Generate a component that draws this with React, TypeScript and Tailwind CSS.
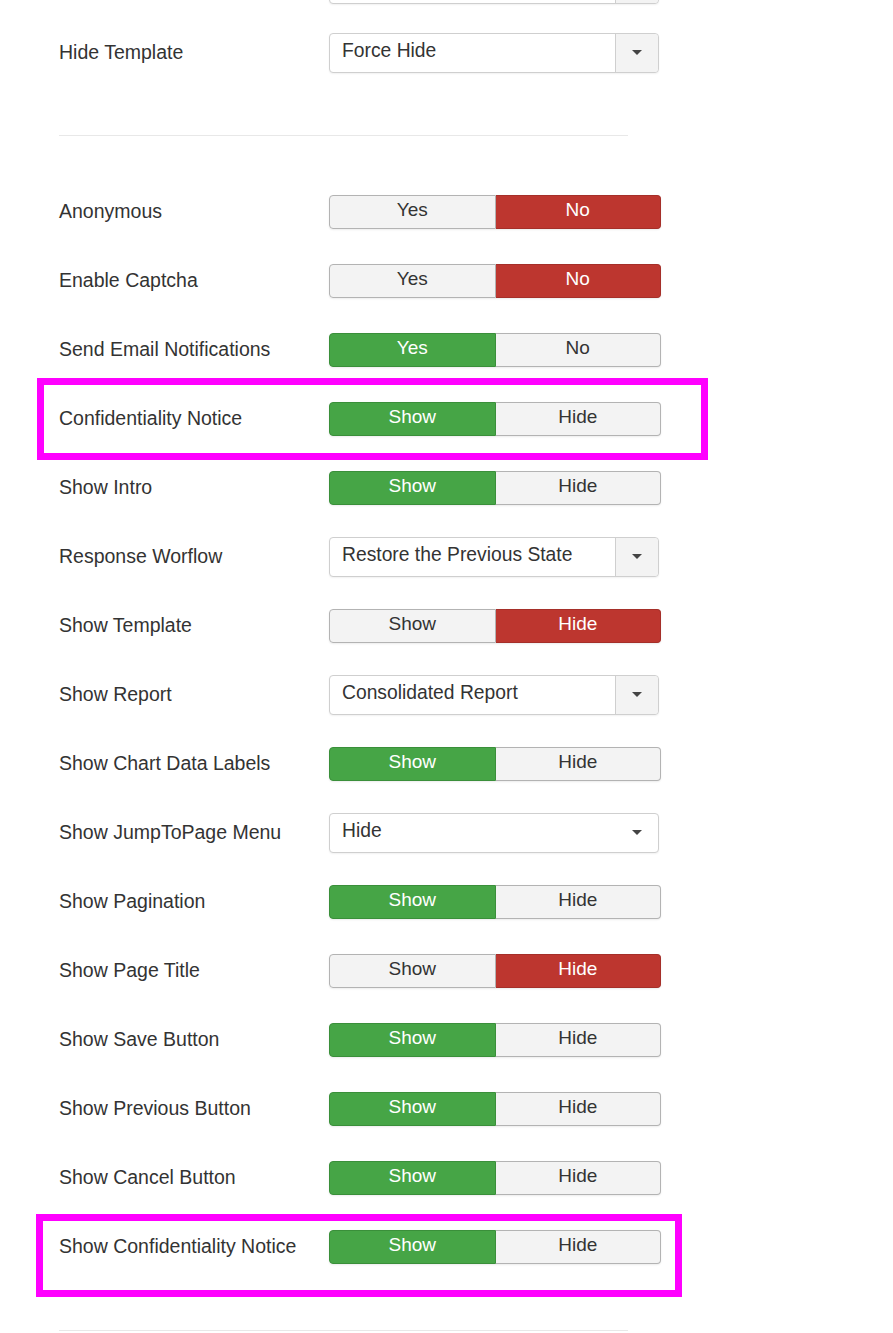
import React from "react";

type Row =
  | { kind: "toggle"; label: string; left: string; right: string; active: "left-green" | "right-red" }
  | { kind: "select"; label: string; value: string; addon: boolean };

const Caret = () => (
  <svg width="10" height="6" viewBox="0 0 10 6" className="block">
    <path d="M0 0 L10 0 L5 5 Z" fill="#444" />
  </svg>
);

function Toggle({ left, right, active }: { left: string; right: string; active: "left-green" | "right-red" }) {
  const leftCls =
    active === "left-green"
      ? "bg-[#46a546] text-white border-[#3a8f3a]"
      : "bg-[#f3f3f3] text-[#333] border-[#b3b3b3]";
  const rightCls =
    active === "right-red"
      ? "bg-[#bd362f] text-white border-[#a52f29]"
      : "bg-[#f3f3f3] text-[#333] border-[#b3b3b3]";
  return (
    <div className="flex w-[332px] h-[34px] rounded-[4px] shadow-[0_1px_2px_rgba(0,0,0,0.08)]">
      <div
        className={`flex-1 flex items-center justify-center border rounded-l-[4px] pb-[2px] text-[19px] ${leftCls}`}
      >
        {left}
      </div>
      <div
        className={`flex-1 flex items-center justify-center border border-l-0 rounded-r-[4px] pb-[2px] text-[19px] ${rightCls}`}
      >
        {right}
      </div>
    </div>
  );
}

function Select({ value, addon }: { value: string; addon: boolean }) {
  return (
    <div className="flex w-[330px] h-[40px] rounded-[4px] border border-[#cfcfcf] bg-white shadow-[0_1px_2px_rgba(0,0,0,0.06)]">
      <div className="flex-1 flex items-center pl-[12px] pb-[3px] text-[19.3px] text-[#333]">{value}</div>
      {addon ? (
        <div className="w-[43px] flex items-center justify-center bg-[#f3f3f3] border-l border-[#cfcfcf] rounded-r-[4px]">
          <Caret />
        </div>
      ) : (
        <div className="w-[43px] flex items-center justify-center">
          <Caret />
        </div>
      )}
    </div>
  );
}

function FormRow({ row }: { row: Row }) {
  return (
    <div className="flex items-center h-[69px]">
      <div className="w-[270px] text-[19.5px] text-[#333]">{row.label}</div>
      {row.kind === "toggle" ? (
        <Toggle left={row.left} right={row.right} active={row.active} />
      ) : (
        <Select value={row.value} addon={row.addon} />
      )}
    </div>
  );
}

const showHide = (label: string, active: "left-green" | "right-red"): Row => ({
  kind: "toggle",
  label,
  left: "Show",
  right: "Hide",
  active,
});

const rows: Row[] = [
  { kind: "toggle", label: "Anonymous", left: "Yes", right: "No", active: "right-red" },
  { kind: "toggle", label: "Enable Captcha", left: "Yes", right: "No", active: "right-red" },
  { kind: "toggle", label: "Send Email Notifications", left: "Yes", right: "No", active: "left-green" },
  showHide("Confidentiality Notice", "left-green"),
  showHide("Show Intro", "left-green"),
  { kind: "select", label: "Response Worflow", value: "Restore the Previous State", addon: true },
  showHide("Show Template", "right-red"),
  { kind: "select", label: "Show Report", value: "Consolidated Report", addon: true },
  showHide("Show Chart Data Labels", "left-green"),
  { kind: "select", label: "Show JumpToPage Menu", value: "Hide", addon: false },
  showHide("Show Pagination", "left-green"),
  showHide("Show Page Title", "right-red"),
  showHide("Show Save Button", "left-green"),
  showHide("Show Previous Button", "left-green"),
  showHide("Show Cancel Button", "left-green"),
  showHide("Show Confidentiality Notice", "left-green"),
];

export default function App() {
  return (
    <div
      className="relative w-[893px] h-[1333px] overflow-hidden bg-white"
      style={{ fontFamily: "'Liberation Sans', Arial, sans-serif" }}
    >
      <div className="pl-[59px] -mt-[51px]">
        <FormRow row={{ kind: "select", label: "", value: "", addon: true }} />
        <FormRow row={{ kind: "select", label: "Hide Template", value: "Force Hide", addon: true }} />
        <div className="w-[569px] h-px bg-[#e8e8e8] mt-[48px] mb-[41px]" />
        {rows.map((r, i) => (
          <FormRow key={i} row={r} />
        ))}
        <div className="w-[569px] h-px bg-[#e8e8e8] mt-[49px]" />
      </div>
      <div className="absolute left-[37px] top-[378px] w-[671px] h-[82px] border-[7px] border-[#ff00ff]" />
      <div className="absolute left-[36px] top-[1214px] w-[646px] h-[83px] border-[7px] border-[#ff00ff]" />
    </div>
  );
}
